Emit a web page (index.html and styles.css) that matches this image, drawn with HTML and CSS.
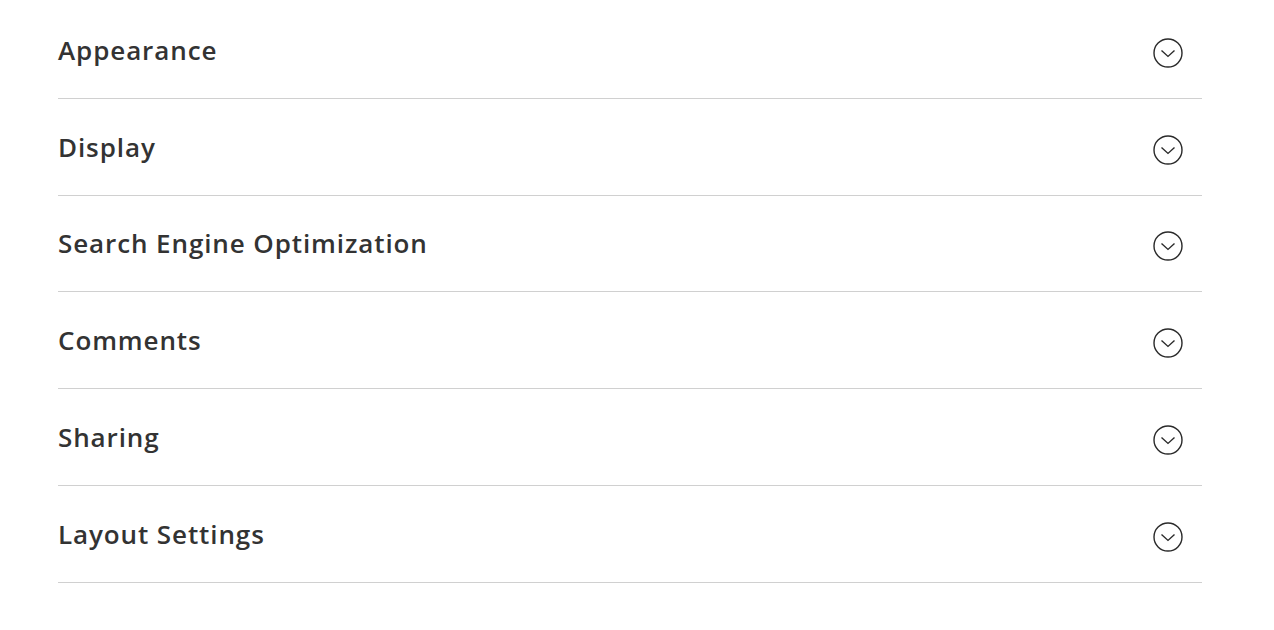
FILE: index.html
```html
<!DOCTYPE html>
<html lang="en">
<head>
    <meta charset="UTF-8">
    <meta name="viewport" content="width=device-width, initial-scale=1.0">
    <title>Settings</title>
    <link rel="stylesheet" href="styles.css">
</head>
<body>
    <div class="settings">
        <div class="section">
            <span class="section-title">Appearance</span>
            <svg class="toggle" viewBox="0 0 30 30"><circle cx="15" cy="15" r="14"/><path d="M8.5 12.4 L15 18.4 L21.5 12.4"/></svg>
        </div>
        <div class="section">
            <span class="section-title">Display</span>
            <svg class="toggle" viewBox="0 0 30 30"><circle cx="15" cy="15" r="14"/><path d="M8.5 12.4 L15 18.4 L21.5 12.4"/></svg>
        </div>
        <div class="section">
            <span class="section-title">Search Engine Optimization</span>
            <svg class="toggle" viewBox="0 0 30 30"><circle cx="15" cy="15" r="14"/><path d="M8.5 12.4 L15 18.4 L21.5 12.4"/></svg>
        </div>
        <div class="section">
            <span class="section-title">Comments</span>
            <svg class="toggle" viewBox="0 0 30 30"><circle cx="15" cy="15" r="14"/><path d="M8.5 12.4 L15 18.4 L21.5 12.4"/></svg>
        </div>
        <div class="section">
            <span class="section-title">Sharing</span>
            <svg class="toggle" viewBox="0 0 30 30"><circle cx="15" cy="15" r="14"/><path d="M8.5 12.4 L15 18.4 L21.5 12.4"/></svg>
        </div>
        <div class="section">
            <span class="section-title">Layout Settings</span>
            <svg class="toggle" viewBox="0 0 30 30"><circle cx="15" cy="15" r="14"/><path d="M8.5 12.4 L15 18.4 L21.5 12.4"/></svg>
        </div>
    </div>
</body>
</html>
```

FILE: styles.css
```css
body {
    font-family: "Open Sans", Arial, sans-serif;
    margin: 0;
    background-color: #fff;
}
.settings {
    width: 1144px;
    margin-left: 58px;
    padding-top: 2px;
}
.section {
    display: flex;
    align-items: center;
    justify-content: space-between;
    height: 95.8px;
    border-bottom: 1px solid #d0d0d0;
}
.section-title {
    font-size: 26px;
    font-weight: 600;
    letter-spacing: 0.9px;
    color: #333;
}
.toggle {
    width: 30px;
    height: 30px;
    margin-top: 6px;
    margin-right: 19px;
    fill: none;
    stroke: #2a2a2a;
    stroke-width: 1.4;
}
```
